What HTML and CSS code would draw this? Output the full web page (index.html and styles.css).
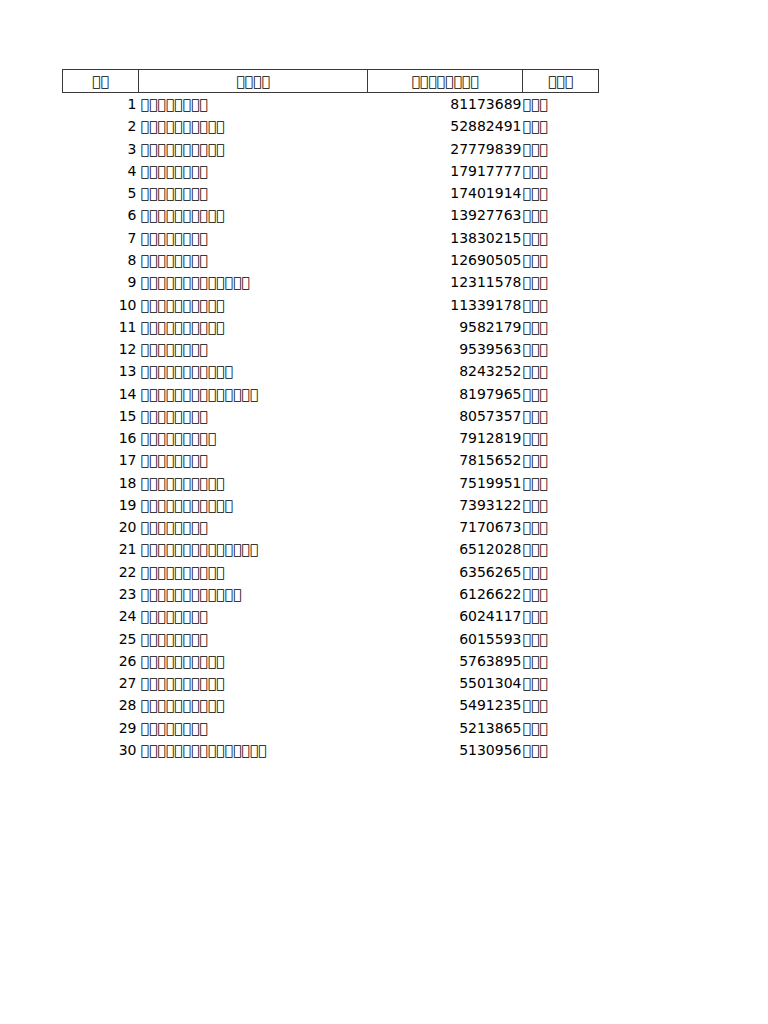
FILE: index.html
```html
<!DOCTYPE html>
<html>
<head>
<meta charset="utf-8">
<link rel="stylesheet" href="styles.css">
</head>
<body>
<table class="sheet">
<colgroup><col class="c1"><col class="c2"><col class="c3"><col class="c4"></colgroup>
<thead>
<tr><th>&#xE000;&#xE001;</th><th>&#xE002;&#xE003;&#xE004;&#xE005;</th><th>&#xE006;&#xE007;&#xE008;&#xE009;&#xE00A;&#xE00B;&#xE00C;&#xE00D;</th><th>&#xE00E;&#xE00F;&#xE010;</th></tr>
</thead>
<tbody id="rows"></tbody>
</table>
<script src="app.js"></script>
</body>
</html>
```

FILE: styles.css
```css
html, body {
  margin: 0;
  padding: 0;
  background: #ffffff;
}
body {
  font-family: "DejaVu Sans", sans-serif;
  font-size: 14px;
  color: #000000;
}
.sheet {
  margin: 69px 0 0 62px;
  border-collapse: collapse;
  table-layout: fixed;
  width: 536px;
}
.c1 { width: 76px; }
.c2 { width: 229px; }
.c3 { width: 155px; }
.c4 { width: 76px; }
.sheet th {
  border: 1px solid #3a3a3a;
  font-weight: normal;
  text-align: center;
  height: 22px;
  padding: 0;
  line-height: 16px;
}
.sheet td {
  height: 22.28px;
  padding: 0;
  line-height: 16px;
  white-space: nowrap;
  overflow: visible;
}
.num { text-align: right; padding-right: 2px !important; }
.name { text-align: left; padding-left: 2px !important; }
.val { text-align: right; padding-right: 1px !important; }
.unit { text-align: left; padding-left: 0; }
```

FILE: app.js
```js
var data = [
  [8, 81173689], [10, 52882491], [10, 27779839], [8, 17917777], [8, 17401914],
  [10, 13927763], [8, 13830215], [8, 12690505], [13, 12311578], [10, 11339178],
  [10, 9582179], [8, 9539563], [11, 8243252], [14, 8197965], [8, 8057357],
  [9, 7912819], [8, 7815652], [10, 7519951], [11, 7393122], [8, 7170673],
  [14, 6512028], [10, 6356265], [12, 6126622], [8, 6024117], [8, 6015593],
  [10, 5763895], [10, 5501304], [10, 5491235], [8, 5213865], [15, 5130956]
];
var body = document.getElementById('rows');
var code = 0xE020;
function word(n) {
  var s = '';
  for (var i = 0; i < n; i++) { s += String.fromCharCode(code++); }
  return s;
}
data.forEach(function (d, i) {
  var tr = document.createElement('tr');
  var cells = [
    ['num', String(i + 1)],
    ['name', word(d[0])],
    ['val', String(d[1])],
    ['unit', word(3)]
  ];
  cells.forEach(function (c) {
    var td = document.createElement('td');
    td.className = c[0];
    td.textContent = c[1];
    tr.appendChild(td);
  });
  body.appendChild(tr);
});
```
